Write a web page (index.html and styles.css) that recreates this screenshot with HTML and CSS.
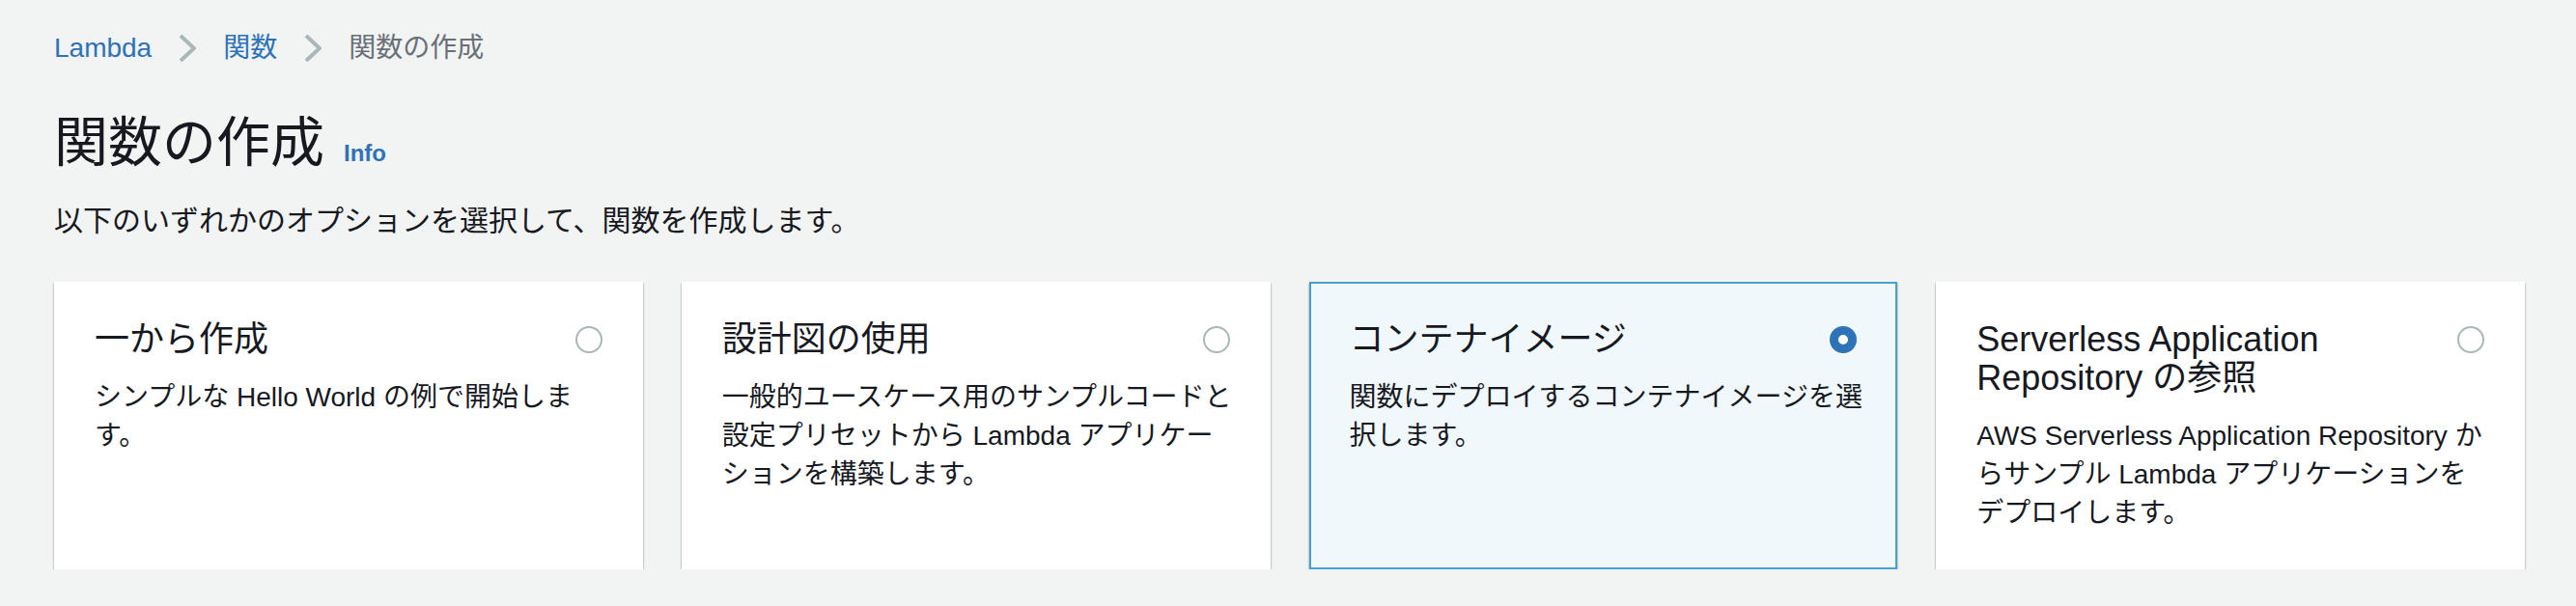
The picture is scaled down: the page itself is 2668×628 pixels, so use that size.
FILE: index.html
```html
<!DOCTYPE html>
<html lang="ja">
<head>
<meta charset="utf-8">
<title>関数の作成</title>
<link rel="stylesheet" href="styles.css">
</head>
<body>
<div class="page">
  <nav class="breadcrumb">
    <a class="crumb-link" href="#">Lambda</a>
    <svg class="chevron" width="18" height="30" viewBox="0 0 18 30"><polyline points="2,2 16,15 2,28" fill="none" stroke="#aab7b8" stroke-width="4"/></svg>
    <a class="crumb-link" href="#">関数</a>
    <svg class="chevron" width="18" height="30" viewBox="0 0 18 30"><polyline points="2,2 16,15 2,28" fill="none" stroke="#aab7b8" stroke-width="4"/></svg>
    <span class="crumb-current">関数の作成</span>
  </nav>

  <div class="header">
    <h1 class="title">関数の作成</h1>
    <a class="info" href="#">Info</a>
  </div>
  <p class="subtitle">以下のいずれかのオプションを選択して、関数を作成します。</p>

  <div class="tiles">
    <div class="tile">
      <div class="tile-head">
        <div class="tile-title">一から作成</div>
        <span class="radio"></span>
      </div>
      <div class="tile-desc">シンプルな Hello World の例で開始しま<br>す。</div>
    </div>
    <div class="tile">
      <div class="tile-head">
        <div class="tile-title">設計図の使用</div>
        <span class="radio"></span>
      </div>
      <div class="tile-desc">一般的ユースケース用のサンプルコードと<br>設定プリセットから Lambda アプリケー<br>ションを構築します。</div>
    </div>
    <div class="tile selected">
      <div class="tile-head">
        <div class="tile-title">コンテナイメージ</div>
        <span class="radio checked"></span>
      </div>
      <div class="tile-desc">関数にデプロイするコンテナイメージを選<br>択します。</div>
    </div>
    <div class="tile">
      <div class="tile-head">
        <div class="tile-title">Serverless Application Repository の参照</div>
        <span class="radio"></span>
      </div>
      <div class="tile-desc">AWS Serverless Application Repository か<br>らサンプル Lambda アプリケーションを<br>デプロイします。</div>
    </div>
  </div>
</div>
</body>
</html>
```
FILE: styles.css
```css
html, body {
  margin: 0;
  padding: 0;
  background: #f2f3f3;
}
body {
  font-family: "Liberation Sans", "Noto Sans CJK JP", sans-serif;
  color: #16191f;
}
.page {
  padding: 30px 53px 0 56px;
}
.breadcrumb {
  display: flex;
  align-items: center;
  height: 40px;
  font-size: 28px;
  line-height: 40px;
}
.crumb-link {
  color: #2e72b8;
  text-decoration: none;
}
.crumb-current {
  color: #687078;
}
.chevron {
  display: block;
  margin: 0 28px;
}
.header {
  display: flex;
  align-items: baseline;
  margin-top: 46px;
}
.title {
  margin: 0;
  font-size: 56px;
  line-height: 64px;
  font-weight: normal;
}
.info {
  margin-left: 20px;
  font-size: 24px;
  font-weight: bold;
  color: #2e72b8;
  text-decoration: none;
}
.subtitle {
  margin: 29px 0 0;
  font-size: 30px;
  line-height: 40px;
}
.tiles {
  display: grid;
  grid-template-columns: repeat(4, minmax(0, 1fr));
  gap: 40px;
  margin-top: 43px;
}
.tile {
  min-width: 0;
  background: #ffffff;
  border: 2px solid transparent;
  padding: 38px 40px 36px;
  box-shadow: 0 2px 2px 0 rgba(0, 28, 36, 0.28), 1px 1px 1px 0 rgba(0, 28, 36, 0.08), -1px 1px 1px 0 rgba(0, 28, 36, 0.08);
}
.tile.selected {
  background: #f1f8fb;
  border-color: #45a2cd;
}
.tile-head {
  display: flex;
  justify-content: space-between;
  align-items: flex-start;
  gap: 20px;
}
.tile-title {
  font-size: 36px;
  line-height: 40px;
}
.radio {
  flex-shrink: 0;
  box-sizing: border-box;
  width: 28px;
  height: 28px;
  margin-top: 6px;
  border-radius: 50%;
  border: 2px solid #aab7b8;
  background: #ffffff;
}
.radio.checked {
  border: 9px solid #2e72b8;
}
.tile-desc {
  margin-top: 20px;
  font-size: 28px;
  line-height: 40px;
  white-space: nowrap;
}
```
